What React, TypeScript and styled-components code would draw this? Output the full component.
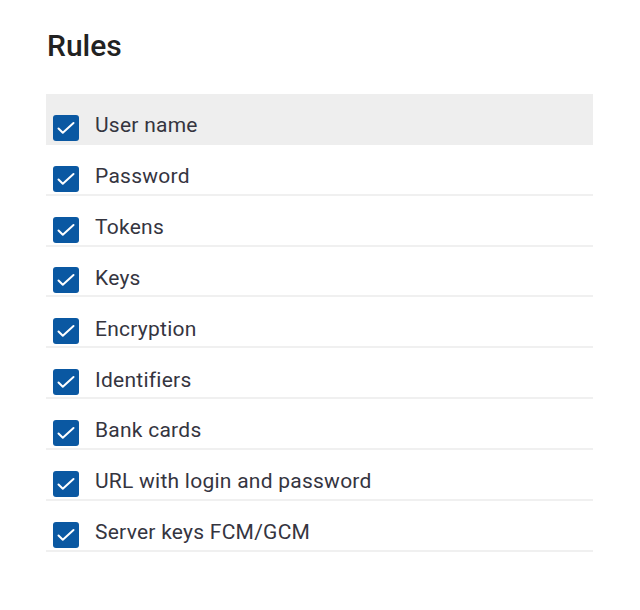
import { FC } from "react";
import styled, { createGlobalStyle } from "styled-components";

const GlobalStyle = createGlobalStyle`
  body {
    margin: 0;
    background: #fff;
    font-family: Roboto, "Liberation Sans", sans-serif;
  }
`;

const Page = styled.div`
  padding: 28px 47px 0 46px;
  width: 547px;
`;

const Title = styled.h2`
  margin: 0 0 0 1px;
  font-size: 30px;
  font-weight: 500;
  line-height: 36px;
  color: #222;
`;

const List = styled.ul`
  list-style: none;
  margin: 30px 0 0;
  padding: 0;
`;

const Row = styled.li<{ $active?: boolean }>`
  display: flex;
  align-items: center;
  gap: 16px;
  height: 48.85px;
  box-sizing: content-box;
  padding: 0 7px;
  border-bottom: 2px solid ${({ $active }) => ($active ? "#eee" : "#f0f0f0")};
  background: ${({ $active }) => ($active ? "#eeeeee" : "transparent")};
`;

const Box = styled.span`
  display: flex;
  flex: none;
  width: 26px;
  height: 26px;
  margin-top: 19px;
  border-radius: 3px;
  background: #0a58a2;
`;

const Label = styled.span`
  margin-top: 14px;
  font-size: 21px;
  letter-spacing: 0.25px;
  color: #35353f;
  white-space: nowrap;
`;

const Check: FC = () => (
  <svg width="26" height="26" viewBox="0 0 26 26" fill="none">
    <path d="M5.5 13.5l4.3 4.2L20.5 8" stroke="#fff" strokeWidth="2" strokeLinecap="round" strokeLinejoin="round" />
  </svg>
);

const rules = [
  "User name",
  "Password",
  "Tokens",
  "Keys",
  "Encryption",
  "Identifiers",
  "Bank cards",
  "URL with login and password",
  "Server keys FCM/GCM",
];

const App: FC = () => (
  <>
    <GlobalStyle />
    <Page>
      <Title>Rules</Title>
      <List>
        {rules.map((rule, i) => (
          <Row key={rule} $active={i === 0}>
            <Box>
              <Check />
            </Box>
            <Label>{rule}</Label>
          </Row>
        ))}
      </List>
    </Page>
  </>
);

export default App;
